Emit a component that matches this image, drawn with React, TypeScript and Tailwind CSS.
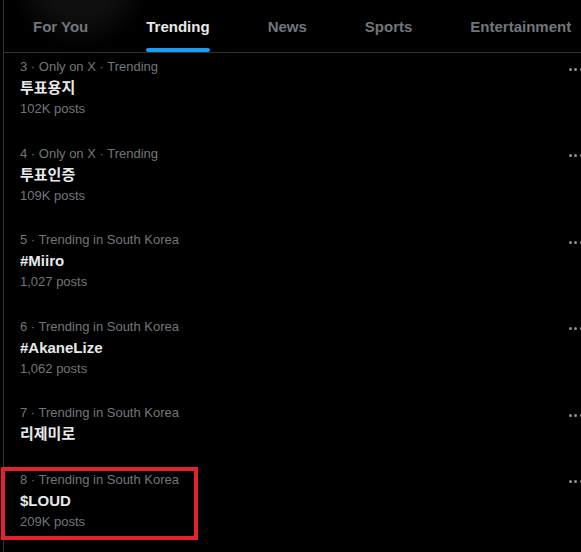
import React from 'react';

type Trend = {
  rank: number;
  context: string;
  title: string;
  posts?: string;
  marked?: boolean;
};

const tabs = ['For You', 'Trending', 'News', 'Sports', 'Entertainment'];

const trends: Trend[] = [
  { rank: 3, context: 'Only on X · Trending', title: '투표용지', posts: '102K posts' },
  { rank: 4, context: 'Only on X · Trending', title: '투표인증', posts: '109K posts' },
  { rank: 5, context: 'Trending in South Korea', title: '#Miiro', posts: '1,027 posts' },
  { rank: 6, context: 'Trending in South Korea', title: '#AkaneLize', posts: '1,062 posts' },
  { rank: 7, context: 'Trending in South Korea', title: '리제미로' },
  { rank: 8, context: 'Trending in South Korea', title: '$LOUD', posts: '209K posts', marked: true },
];

function MoreDots() {
  return (
    <div className="mt-[2px] flex h-5 items-center gap-[2.5px] -mr-[1.5px]">
      <span className="h-[3px] w-[3px] rounded-full bg-[#8b9096]" />
      <span className="h-[3px] w-[3px] rounded-full bg-[#8b9096]" />
      <span className="h-[3px] w-[3px] rounded-full bg-[#8b9096]" />
    </div>
  );
}

function TrendRow({ t, first }: { t: Trend; first: boolean }) {
  return (
    <div className={`relative flex pl-[20px] pb-[12px] ${first ? 'pt-[4px]' : 'pt-[12.5px]'}`}>
      <div className="flex-1">
        <p className="h-5 text-[13px] leading-5 text-[#71767b]">
          {t.rank} · {t.context}
        </p>
        <p className="h-[22px] text-[15px] font-bold leading-[22px] text-[#e7e9ea]">{t.title}</p>
        {t.posts && <p className="h-5 text-[13px] leading-5 text-[#71767b]">{t.posts}</p>}
      </div>
      <MoreDots />
      {t.marked && (
        <div className="pointer-events-none absolute left-[1px] top-[10px] h-[73px] w-[197px] border-4 border-[#e3222b]" />
      )}
    </div>
  );
}

export default function App() {
  return (
    <div className="relative h-[552px] w-[581px] overflow-hidden bg-black [font-family:'Liberation_Sans','Noto_Sans_CJK_KR',sans-serif]">
      {/* faint blurred avatar glow behind the header */}
      <div className="pointer-events-none absolute left-[25px] top-[-75px] h-[110px] w-[110px] rounded-full bg-[#1a1a1c] opacity-60 blur-[12px]" />
      <div className="relative ml-[3px] h-full border-l border-[#2f3336]">
        <nav className="flex h-[53px] gap-[58px] border-b border-[#2f3336] pl-[29px]">
          {tabs.map((tab) => {
            const active = tab === 'Trending';
            return (
              <div key={tab} className="relative flex items-center pt-[2px]">
                <span
                  className={`whitespace-nowrap text-[15px] font-bold ${
                    active ? 'text-[#e7e9ea]' : 'text-[#71767b]'
                  }`}
                >
                  {tab}
                </span>
                {active && (
                  <span className="absolute bottom-0 left-0 right-0 h-[4px] rounded-full bg-[#1d9bf0]" />
                )}
              </div>
            );
          })}
        </nav>
        <div className="-ml-[4px]">
          {trends.map((t, i) => (
            <TrendRow key={t.rank} t={t} first={i === 0} />
          ))}
        </div>
      </div>
    </div>
  );
}
